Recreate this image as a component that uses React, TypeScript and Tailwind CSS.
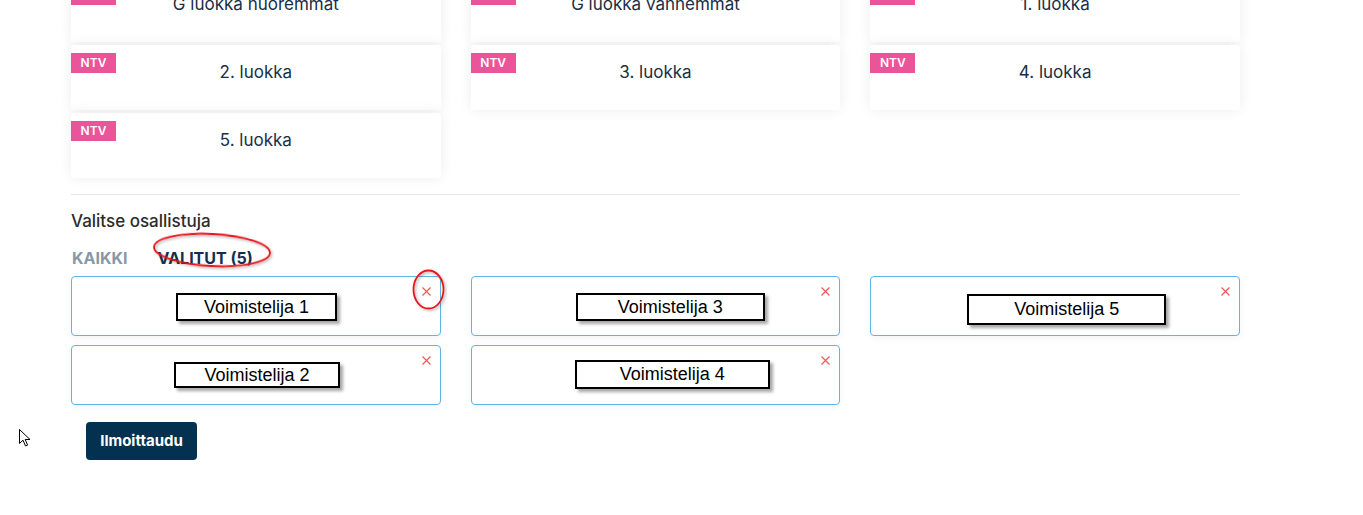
import React from 'react';

const classes = [
  'G luokka nuoremmat',
  'G luokka vanhemmat',
  '1. luokka',
  '2. luokka',
  '3. luokka',
  '4. luokka',
  '5. luokka',
];

// selected gymnasts, boxed annotation sizes taken from the picture
const selected = [
  { name: 'Voimistelija 1', left: 104, top: 16, w: 161, h: 28 },
  { name: 'Voimistelija 3', left: 104, top: 16, w: 189, h: 28 },
  { name: 'Voimistelija 5', left: 96, top: 17, w: 199, h: 31 },
  { name: 'Voimistelija 2', left: 102, top: 16, w: 166, h: 26 },
  { name: 'Voimistelija 4', left: 103, top: 14, w: 195, h: 29 },
];

const ClassCard = ({ label }: { label: string }) => (
  <div className="relative h-[65px] bg-white rounded-[3px] shadow-[0_0_14px_rgba(0,0,0,0.07)]">
    <span className="absolute left-0 top-2 w-[45px] h-5 bg-[#ea5499] text-white text-[12px] font-semibold flex items-center justify-center">
      NTV
    </span>
    <div className="pt-[15px] text-center text-[17px] leading-6 text-[#1a2e46]">{label}</div>
  </div>
);

const XIcon = () => (
  <svg width="9" height="9" viewBox="0 0 9 9" className="absolute right-[9px] top-[10px]">
    <path d="M0.5 0.5 L8.5 8.5 M8.5 0.5 L0.5 8.5" stroke="#ec5a57" strokeWidth="1.2" />
  </svg>
);

const SelectedCard = ({ s }: { s: (typeof selected)[number] }) => (
  <div className="relative h-[60px] bg-white border border-[#5db6e2] rounded-[4px] shadow-[0_2px_8px_rgba(0,0,0,0.05)]">
    <div
      className="absolute flex items-center justify-center bg-white border-2 border-black shadow-[3px_3px_3px_rgba(0,0,0,0.35)] text-black text-[18px]"
      style={{ left: s.left, top: s.top, width: s.w, height: s.h, fontFamily: '"Liberation Sans", Arial, sans-serif' }}
    >
      {s.name}
    </div>
    <XIcon />
  </div>
);

export default function App() {
  return (
    <div
      className="relative w-[1363px] h-[515px] bg-white overflow-hidden"
      style={{ fontFamily: 'Inter, "Noto Sans", sans-serif' }}
    >
      <div className="ml-[71px] w-[1169px] -mt-[23px]">
        <div className="grid grid-cols-3 gap-x-[30px] gap-y-[3px]">
          {classes.map((c) => (
            <ClassCard key={c} label={c} />
          ))}
        </div>

        <div className="mt-[16px] border-t border-[#e6e6e6]" />

        <div className="mt-[14px] text-[17px] leading-6 font-medium text-[#2c2c2c]">Valitse osallistuja</div>

        <div className="mt-[15px] flex gap-[30px] text-[16px] leading-5 font-bold">
          <span className="text-[#8797a6] ml-[1px]">KAIKKI</span>
          <span className="text-[#12304e]">VALITUT (5)</span>
        </div>

        <div className="mt-[8px] grid grid-cols-3 gap-x-[30px] gap-y-[9px]">
          {selected.map((s) => (
            <SelectedCard key={s.name} s={s} />
          ))}
        </div>

        <button className="mt-[17px] ml-[15px] w-[111px] h-[38px] rounded-[4px] bg-[#03314f] text-white text-[15px] font-bold">
          Ilmoittaudu
        </button>
      </div>

      {/* red annotation ellipses */}
      <svg className="absolute left-0 top-0 pointer-events-none" width="1363" height="515">
        <defs>
          <filter id="sh" x="-20%" y="-20%" width="140%" height="140%">
            <feDropShadow dx="1.5" dy="1.5" stdDeviation="1" floodColor="#000" floodOpacity="0.3" />
          </filter>
        </defs>
        <ellipse cx="212" cy="250" rx="58" ry="16" transform="rotate(3 212 250)" fill="none" stroke="#e8141b" strokeWidth="1.8" filter="url(#sh)" />
        <ellipse cx="428.5" cy="289.5" rx="15" ry="19" fill="none" stroke="#e8141b" strokeWidth="1.8" filter="url(#sh)" />
      </svg>

      {/* mouse cursor */}
      <svg className="absolute left-[19px] top-[429px]" width="14" height="20" viewBox="0 0 14 20">
        <path d="M0.5 0.5 L0.5 14.5 L4 11.2 L6.5 17 L8.6 16.1 L6.2 10.5 L11 10.5 Z" fill="#fff" stroke="#000" strokeWidth="1" strokeLinejoin="miter" />
      </svg>
    </div>
  );
}
